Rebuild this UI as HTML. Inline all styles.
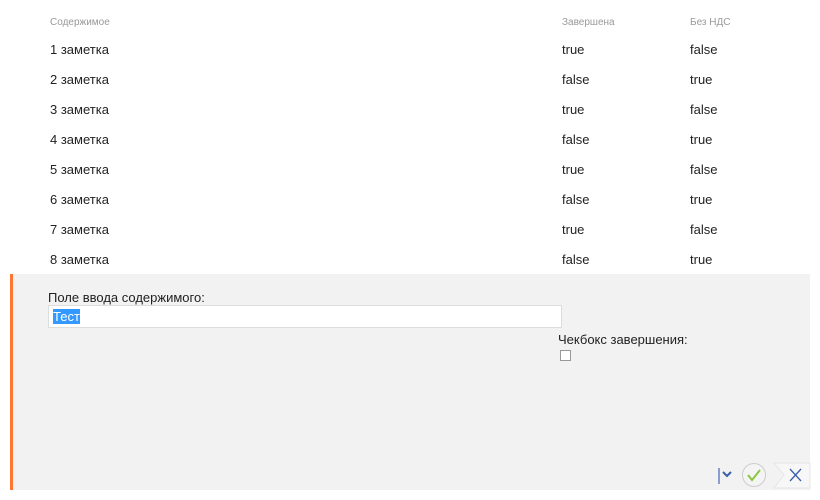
<!DOCTYPE html>
<html><head><meta charset="utf-8"><style>
body{margin:0;width:820px;height:500px;background:#fff;font-family:"Liberation Sans","DejaVu Sans",sans-serif;position:relative;overflow:hidden;color:#222}
.t{position:absolute;font-size:13px;white-space:nowrap}
.h{position:absolute;font-size:10px;color:#999}
</style></head><body>
<div class="h" style="left:50px;top:17px">Содержимое</div>
<div class="h" style="left:562px;top:17px">Завершена</div>
<div class="h" style="left:690px;top:17px">Без НДС</div>
<div class="t" style="left:50px;top:42px">1 заметка</div><div class="t" style="left:562px;top:42px">true</div><div class="t" style="left:690px;top:42px">false</div>
<div class="t" style="left:50px;top:72px">2 заметка</div><div class="t" style="left:562px;top:72px">false</div><div class="t" style="left:690px;top:72px">true</div>
<div class="t" style="left:50px;top:102px">3 заметка</div><div class="t" style="left:562px;top:102px">true</div><div class="t" style="left:690px;top:102px">false</div>
<div class="t" style="left:50px;top:132px">4 заметка</div><div class="t" style="left:562px;top:132px">false</div><div class="t" style="left:690px;top:132px">true</div>
<div class="t" style="left:50px;top:162px">5 заметка</div><div class="t" style="left:562px;top:162px">true</div><div class="t" style="left:690px;top:162px">false</div>
<div class="t" style="left:50px;top:192px">6 заметка</div><div class="t" style="left:562px;top:192px">false</div><div class="t" style="left:690px;top:192px">true</div>
<div class="t" style="left:50px;top:222px">7 заметка</div><div class="t" style="left:562px;top:222px">true</div><div class="t" style="left:690px;top:222px">false</div>
<div class="t" style="left:50px;top:252px">8 заметка</div><div class="t" style="left:562px;top:252px">false</div><div class="t" style="left:690px;top:252px">true</div>
<div style="position:absolute;left:10px;top:274px;width:800px;height:216px;background:#f2f2f2;border-left:3px solid #ff7733;box-sizing:border-box"></div>
<div class="t" style="left:48px;top:290px">Поле ввода содержимого:</div>
<div style="position:absolute;left:48px;top:305px;width:514px;height:23px;background:#fff;border:1px solid #ddd;box-sizing:border-box"></div>
<div class="t" style="left:53px;top:309px;background:#3399ff;color:#fff;font-size:13px;line-height:15px">Тест</div>
<div class="t" style="left:558px;top:332px">Чекбокс завершения:</div>
<div style="position:absolute;left:560px;top:350px;width:11px;height:11px;border:1px solid #999;box-sizing:border-box;background:#fff"></div>
<svg style="position:absolute;left:710px;top:460px" width="110" height="32">
<line x1="9" y1="8" x2="9" y2="24" stroke="#6a7fc4" stroke-width="1.5"/>
<polyline points="13,12 17,16 21,12" fill="none" stroke="#3a5fa8" stroke-width="2"/>
<circle cx="44" cy="15" r="11.5" fill="#f4f4f4" stroke="#ccc"/>
<polyline points="38,15 42,20 50,10" fill="none" stroke="#8cc63f" stroke-width="2"/>
<polygon points="64,3 100,3 100,28 64,28 74,15" fill="#f7f7f7" stroke="#e6e6e6"/>
<line x1="80" y1="9" x2="91" y2="21" stroke="#3a5fa8" stroke-width="1.3"/>
<line x1="91" y1="9" x2="80" y2="21" stroke="#3a5fa8" stroke-width="1.3"/>
</svg>
</body></html>
